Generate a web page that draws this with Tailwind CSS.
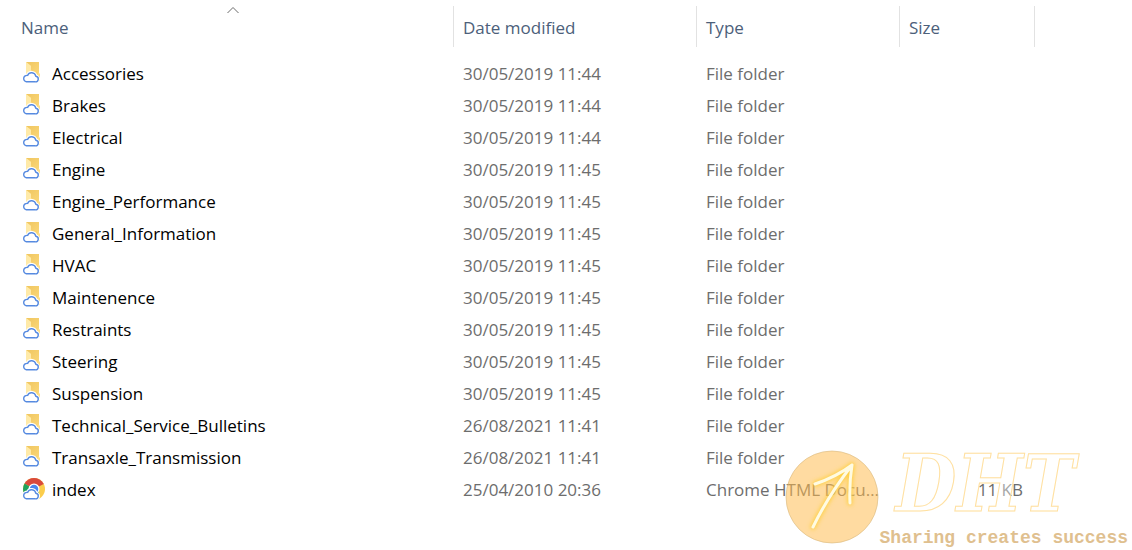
<!DOCTYPE html>
<html lang="en">
<head>
    <meta charset="UTF-8">
    <meta name="viewport" content="width=device-width, initial-scale=1.0">
    <title>Files</title>
    <script src="https://cdn.jsdelivr.net/npm/@tailwindcss/browser@4"></script>
</head>
<body class="bg-white font-['Open_Sans','Noto_Sans',sans-serif] text-[17px] leading-6">
    <!-- Shared icons -->
    <svg class="absolute size-0">
        <defs>
            <linearGradient id="fold" x1="0" y1="0" x2="1" y2="1">
                <stop offset="0" stop-color="#efc560"/>
                <stop offset="1" stop-color="#fbd878"/>
            </linearGradient>
            <symbol id="cloud" viewBox="0 0 18 12">
                <path d="M4.300 10.800h8.800a2.800 2.800 0 0 0 .7-5.600A4.300 4.300 0 0 0 5.600 4.400A3.200 3.200 0 0 0 4.300 10.800z" fill="#fff" stroke="#fff" stroke-width="3.500"/>
                <path d="M4.300 10.800h8.800a2.800 2.800 0 0 0 .7-5.600A4.300 4.300 0 0 0 5.600 4.400A3.200 3.200 0 0 0 4.300 10.800z" fill="#fff" stroke="#568ae0" stroke-width="1.400"/>
            </symbol>
            <symbol id="folder" viewBox="0 0 24 24">
                <path d="M4 0h13v11l1 1v7H4z" fill="#ffdf87"/>
                <path d="M4 0h13v10l-2 3L9 8V4z" fill="url(#fold)"/>
                <path d="M4 0l5 4v13l-5-2z" fill="#ffeaa8"/>
                <use href="#cloud" x="0" y="9" width="18" height="12"/>
            </symbol>
            <symbol id="chrome" viewBox="0 0 24 24">
                <circle cx="12" cy="11" r="11" fill="#fbcd4c"/>
                <path d="M12 11L2.500 5.500A11 11 0 0 1 21.500 5.500L21.700 6z" fill="#d9493c"/>
                <path d="M12 11L2.500 5.500A11 11 0 0 0 12 22l5-8z" fill="#1fa15d"/>
                <circle cx="12" cy="11" r="5.500" fill="#fff"/>
                <circle cx="12" cy="11" r="4.300" fill="#4a87ee"/>
                <use href="#cloud" x="0" y="10" width="18" height="12"/>
            </symbol>
        </defs>
    </svg>

    <main class="relative min-h-screen overflow-hidden pt-1.5">
        <table class="w-full table-fixed border-separate border-spacing-0 text-left">
            <colgroup>
                <col class="w-[454px]">
                <col class="w-[243px]">
                <col class="w-[203px]">
                <col class="w-[135px]">
                <col>
            </colgroup>
            <thead class="text-[#4c607a]">
                <tr class="h-[41px]">
                    <th class="relative border-r border-[#e2e2e2] pt-0.5 pl-[21px] font-normal">
                        Name
                        <svg class="absolute top-0 left-1/2 h-2 w-3" viewBox="0 0 12 8" fill="none" stroke="#6a6a6a"><path d="M.5 7L6 1.500L11.500 7"/></svg>
                    </th>
                    <th class="border-r border-[#e2e2e2] pt-0.5 pl-[9px] font-normal">Date modified</th>
                    <th class="border-r border-[#e2e2e2] pt-0.5 pl-[9px] font-normal">Type</th>
                    <th class="border-r border-[#e2e2e2] pt-0.5 pl-[9px] font-normal">Size</th>
                    <td></td>
                </tr>
                <tr class="h-[11px]"><td colspan="5"></td></tr>
            </thead>
            <tbody id="files" class="text-[#6d6d6d]"></tbody>
        </table>

        <!-- Watermark -->
        <div class="pointer-events-none absolute right-0 bottom-0 flex items-end">
            <svg class="mb-1.5 h-24 w-24" viewBox="0 0 96 96">
                <defs>
                    <filter id="glow" x="-30%" y="-30%" width="160%" height="160%"><feGaussianBlur stdDeviation="2"/></filter>
                </defs>
                <circle cx="48" cy="49" r="46" fill="#ffbb4d" fill-opacity=".53" stroke="#d9b77c" stroke-opacity=".6"/>
                <g fill="none" stroke-linecap="round" stroke-linejoin="round">
                    <path d="M29 79Q44 48 68 17M31 36Q52 29 68 17Q65 36 66 55" stroke="#ffd040" stroke-width="5" filter="url(#glow)"/>
                    <path d="M29 79Q44 48 68 17M31 36Q52 29 68 17Q65 36 66 55" stroke="#fffbe2" stroke-width="3"/>
                </g>
            </svg>
            <div class="pr-1">
                <p class="pl-4 font-['DejaVu_Serif_Condensed','DejaVu_Serif',serif] text-[78px] leading-[84px] font-bold text-white/40 italic [-webkit-text-stroke:1px_#ffe0a0]">DHT</p>
                <p class="font-['Liberation_Mono',monospace] text-[18px] leading-6 font-bold text-[#dfc08f]">Sharing creates success</p>
            </div>
        </div>
    </main>

    <script>
        const files = [
            ["Accessories", "30/05/2019 11:44"],
            ["Brakes", "30/05/2019 11:44"],
            ["Electrical", "30/05/2019 11:44"],
            ["Engine", "30/05/2019 11:45"],
            ["Engine_Performance", "30/05/2019 11:45"],
            ["General_Information", "30/05/2019 11:45"],
            ["HVAC", "30/05/2019 11:45"],
            ["Maintenence", "30/05/2019 11:45"],
            ["Restraints", "30/05/2019 11:45"],
            ["Steering", "30/05/2019 11:45"],
            ["Suspension", "30/05/2019 11:45"],
            ["Technical_Service_Bulletins", "26/08/2021 11:41"],
            ["Transaxle_Transmission", "26/08/2021 11:41"],
            ["index", "25/04/2010 20:36", "Chrome HTML Document", "11 KB", "chrome"],
        ];

        document.getElementById("files").innerHTML = files.map(([name, date, type = "File folder", size = "", icon = "folder"]) => `
            <tr class="h-8">
                <td class="pl-[22px]">
                    <div class="flex items-center gap-1.5 text-black">
                        <svg class="size-6 shrink-0"><use href="#${icon}"/></svg>
                        <span>${name}</span>
                    </div>
                </td>
                <td class="pl-[9px]">${date}</td>
                <td class="truncate pr-4 pl-[9px]">${type}</td>
                <td class="pr-3 text-right">${size}</td>
                <td></td>
            </tr>`).join("");
    </script>
</body>
</html>
